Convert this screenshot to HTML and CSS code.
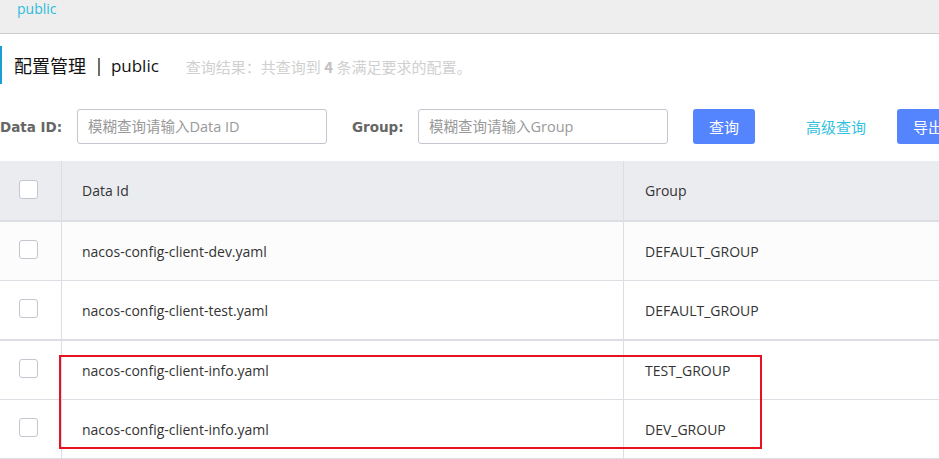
FILE: index.html
```html
<!DOCTYPE html>
<html lang="zh">
<head>
<meta charset="utf-8">
<title>配置管理</title>
<link rel="stylesheet" href="styles.css">
</head>
<body>
<div class="page">
  <div class="topbar"><span class="ns-link">public</span></div>

  <div class="title-row">
    <span class="title">配置管理</span>
    <span class="sep">|</span>
    <span class="title title-ns">public</span>
    <span class="result">查询结果：共查询到 <b>4</b> 条满足要求的配置。</span>
  </div>

  <div class="search-row">
    <label class="lbl lbl-data">Data ID:</label>
    <div class="input">模糊查询请输入Data ID</div>
    <label class="lbl lbl-group">Group:</label>
    <div class="input">模糊查询请输入Group</div>
    <button class="btn btn-primary btn-query">查询</button>
    <span class="link-btn">高级查询</span>
    <button class="btn btn-primary btn-export">导出</button>
  </div>

  <div class="table">
    <div class="row head">
      <div class="cell c-check"><span class="checkbox"></span></div>
      <div class="cell c-id">Data Id</div>
      <div class="cell c-group">Group</div>
    </div>
    <div class="row hover">
      <div class="cell c-check"><span class="checkbox"></span></div>
      <div class="cell c-id">nacos-config-client-dev.yaml</div>
      <div class="cell c-group">DEFAULT_GROUP</div>
    </div>
    <div class="row thick">
      <div class="cell c-check"><span class="checkbox"></span></div>
      <div class="cell c-id">nacos-config-client-test.yaml</div>
      <div class="cell c-group">DEFAULT_GROUP</div>
    </div>
    <div class="row">
      <div class="cell c-check"><span class="checkbox"></span></div>
      <div class="cell c-id">nacos-config-client-info.yaml</div>
      <div class="cell c-group">TEST_GROUP</div>
    </div>
    <div class="row">
      <div class="cell c-check"><span class="checkbox"></span></div>
      <div class="cell c-id">nacos-config-client-info.yaml</div>
      <div class="cell c-group">DEV_GROUP</div>
    </div>
    <div class="highlight"></div>
  </div>
</div>
</body>
</html>
```

FILE: styles.css
```css
* { box-sizing: border-box; }
html, body { margin: 0; padding: 0; background: #fff; }
body {
  font-family: "Open Sans", "Noto Sans CJK SC", sans-serif;
  font-size: 14px;
  color: #333;
  width: 939px;
  height: 459px;
  overflow: hidden;
}
.page { width: 939px; overflow: hidden; }

.topbar {
  height: 34px;
  background: #eeeeee;
  border-bottom: 1px solid #cccccc;
  padding-left: 17px;
  line-height: 18px;
}
.ns-link { color: #2dbbdb; font-size: 14px; }

.title-row {
  margin-top: 12px;
  height: 38px;
  border-left: 2px solid #1a9fd5;
  display: flex;
  align-items: center;
  padding-left: 12px;
  white-space: nowrap;
}
.title { font-size: 18px; color: #111; font-family: "Noto Sans CJK SC", sans-serif; }
.title-ns { font-family: "Open Sans", sans-serif; font-size: 17px; }
.sep { font-size: 18px; color: #111; margin: 0 7px 0 8px; }
.result {
  margin-left: 27px;
  font-family: "Noto Sans CJK SC", sans-serif;
  font-size: 15px;
  color: #d0d0d0;
  margin-top: 3px;
}
.result b { font-weight: bold; color: #c2c2c2; }

.search-row {
  margin-top: 25px;
  display: flex;
  align-items: center;
  height: 35px;
  white-space: nowrap;
}
.search-row > * { flex: none; }
.lbl {
  font-weight: bold;
  color: #666;
  font-size: 13.5px;
  font-family: "DejaVu Sans", "Noto Sans CJK SC", sans-serif;
}
.lbl-data { width: 77px; }
.lbl-group { margin-left: 25px; width: 66px; }
.input {
  width: 250px;
  height: 35px;
  border: 1px solid #c4c6cf;
  border-radius: 3px;
  padding-left: 10px;
  line-height: 33px;
  color: #999;
  font-size: 14.5px;
  font-family: "Open Sans", "Noto Sans CJK SC", sans-serif;
}
.btn {
  height: 35px;
  border: none;
  border-radius: 3px;
  font-family: "Noto Sans CJK SC", sans-serif;
  font-size: 15px;
  color: #fff;
  padding: 0 16px;
}
.btn-primary { background: #5584ff; }
.btn-query { margin-left: 25px; width: 62px; }
.link-btn {
  margin-left: 51px;
  color: #33c2e0;
  font-family: "Noto Sans CJK SC", sans-serif;
  font-size: 15px;
  width: 91px;
}
.btn-export { width: 62px; text-align: left; }

.table { margin-top: 17px; position: relative; width: 939px; }
.row {
  display: grid;
  grid-template-columns: 62px 562px 1fr;
  height: 59px;
  border-bottom: 1px solid #dcdee3;
}
.row.head {
  background: #ebecf0;
  height: 61px;
  border-bottom: 2px solid #dcdee3;
}
.row.hover { background: #fcfcfd; }
.row.thick { height: 60px; border-bottom: 2px solid #dcdee3; }
.cell {
  display: flex;
  align-items: center;
  padding-left: 20px;
  border-right: 1px solid #dcdee3;
}
.c-check { padding-left: 19px; }
.c-group { border-right: none; padding-left: 21px; }
.checkbox {
  display: block;
  width: 19px;
  height: 19px;
  border: 1px solid #c4c6cf;
  border-radius: 3px;
  background: #fff;
  margin-bottom: 3px;
}

.highlight {
  position: absolute;
  left: 59px;
  top: 194px;
  width: 703px;
  height: 94px;
  border: 2px solid #e8111f;
  pointer-events: none;
}
```
